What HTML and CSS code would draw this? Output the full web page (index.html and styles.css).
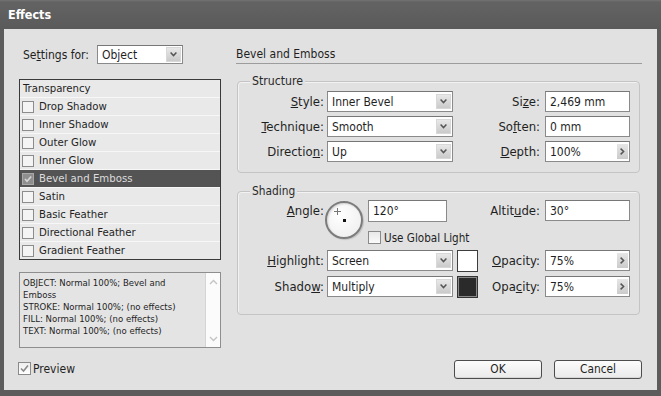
FILE: index.html
```html
<!DOCTYPE html>
<html>
<head>
<meta charset="utf-8">
<link rel="stylesheet" href="styles.css">
</head>
<body>
<div class="window">
  <div class="titlebar">Effects</div>
  <div class="content">
    <div class="left">
      <div class="settings">
        <span class="set-lbl">Se<u>t</u>tings for:</span>
        <div class="select sel-obj"><span class="val">Object</span><span class="drop"><svg width="7" height="5" viewBox="0 0 7 5"><path d="M0.6 0.6 L3.5 3.6 L6.4 0.6" fill="none" stroke="#555" stroke-width="1.5"/></svg></span></div>
      </div>
      <ul class="list">
        <li class="head">Transparency</li>
        <li><span class="cb"></span>Drop Shadow</li>
        <li><span class="cb"></span>Inner Shadow</li>
        <li><span class="cb"></span>Outer Glow</li>
        <li><span class="cb"></span>Inner Glow</li>
        <li class="selected"><span class="cb on"><svg width="10" height="10" viewBox="0 0 10 10"><path d="M2 5 L4 7.2 L8.2 2.5" fill="none" stroke="#d6d6d6" stroke-width="1.6"/></svg></span>Bevel and Emboss</li>
        <li><span class="cb"></span>Satin</li>
        <li><span class="cb"></span>Basic Feather</li>
        <li><span class="cb"></span>Directional Feather</li>
        <li><span class="cb"></span>Gradient Feather</li>
      </ul>
      <div class="summary">
        <div class="sumtext">OBJECT: Normal 100%; Bevel and<br>Emboss<br>STROKE: Normal 100%; (no effects)<br>FILL: Normal 100%; (no effects)<br>TEXT: Normal 100%; (no effects)</div>
        <div class="scroll">
          <svg width="9" height="6" viewBox="0 0 9 6"><path d="M1 5 L4.5 1.5 L8 5" fill="none" stroke="#c4c4c4" stroke-width="1.4"/></svg>
          <svg width="9" height="6" viewBox="0 0 9 6"><path d="M1 1 L4.5 4.5 L8 1" fill="none" stroke="#c4c4c4" stroke-width="1.4"/></svg>
        </div>
      </div>
      <div class="preview"><span class="box"><svg width="11" height="11" viewBox="0 0 11 11"><path d="M2 5.5 L4.5 8 L9 2.5" fill="none" stroke="#8a8a8a" stroke-width="1.6"/></svg></span>Preview</div>
    </div>

    <div class="right">
      <div class="header">Bevel and Emboss</div>

      <div class="group">
        <div class="legend">Structure</div>
        <div class="sgrid">
          <span class="lbl"><u>S</u>tyle:</span>
          <div class="select"><span class="val">Inner Bevel</span><span class="drop"><svg width="7" height="5" viewBox="0 0 7 5"><path d="M0.6 0.6 L3.5 3.6 L6.4 0.6" fill="none" stroke="#555" stroke-width="1.5"/></svg></span></div>
          <span class="rlbl">Si<u>z</u>e:</span>
          <div class="field">2,469 mm</div>

          <span class="lbl"><u>T</u>echnique:</span>
          <div class="select"><span class="val">Smooth</span><span class="drop"><svg width="7" height="5" viewBox="0 0 7 5"><path d="M0.6 0.6 L3.5 3.6 L6.4 0.6" fill="none" stroke="#555" stroke-width="1.5"/></svg></span></div>
          <span class="rlbl">So<u>f</u>ten:</span>
          <div class="field">0 mm</div>

          <span class="lbl">Directio<u>n</u>:</span>
          <div class="select"><span class="val">Up</span><span class="drop"><svg width="7" height="5" viewBox="0 0 7 5"><path d="M0.6 0.6 L3.5 3.6 L6.4 0.6" fill="none" stroke="#555" stroke-width="1.5"/></svg></span></div>
          <span class="rlbl"><u>D</u>epth:</span>
          <div class="field"><span class="val">100%</span><span class="step"><svg width="5" height="7" viewBox="0 0 5 7"><path d="M0.6 0.6 L3.6 3.5 L0.6 6.4" fill="none" stroke="#555" stroke-width="1.5"/></svg></span></div>
        </div>
      </div>

      <div class="group shading">
        <div class="legend">Shading</div>
        <div class="shgrid">
          <span class="lbl top"><u>A</u>ngle:</span>
          <div class="angle-cell">
            <div class="dial"><span class="cross"></span><span class="dot"></span></div>
            <div class="angle-col">
              <div class="field angle-field">120°</div>
              <div class="global"><span class="box"></span>Use Global Light</div>
            </div>
          </div>
          <span class="rlbl top">Altit<u>u</u>de:</span>
          <div class="field top">30°</div>

          <span class="lbl"><u>H</u>ighlight:</span>
          <div class="sel-swatch">
            <div class="select"><span class="val">Screen</span><span class="drop"><svg width="7" height="5" viewBox="0 0 7 5"><path d="M0.6 0.6 L3.5 3.6 L6.4 0.6" fill="none" stroke="#555" stroke-width="1.5"/></svg></span></div>
            <span class="swatch light"></span>
          </div>
          <span class="rlbl"><u>O</u>pacity:</span>
          <div class="field"><span class="val">75%</span><span class="step"><svg width="5" height="7" viewBox="0 0 5 7"><path d="M0.6 0.6 L3.6 3.5 L0.6 6.4" fill="none" stroke="#555" stroke-width="1.5"/></svg></span></div>

          <span class="lbl">Shado<u>w</u>:</span>
          <div class="sel-swatch">
            <div class="select"><span class="val">Multiply</span><span class="drop"><svg width="7" height="5" viewBox="0 0 7 5"><path d="M0.6 0.6 L3.5 3.6 L6.4 0.6" fill="none" stroke="#555" stroke-width="1.5"/></svg></span></div>
            <span class="swatch dark"></span>
          </div>
          <span class="rlbl">Opa<u>c</u>ity:</span>
          <div class="field"><span class="val">75%</span><span class="step"><svg width="5" height="7" viewBox="0 0 5 7"><path d="M0.6 0.6 L3.6 3.5 L0.6 6.4" fill="none" stroke="#555" stroke-width="1.5"/></svg></span></div>
        </div>
      </div>

      <div class="buttons">
        <div class="btn">OK</div>
        <div class="btn">Cancel</div>
      </div>
    </div>
  </div>
</div>
</body>
</html>
```

FILE: styles.css
```css
* { box-sizing: border-box; }
html, body { margin: 0; padding: 0; }
body {
  width: 661px;
  height: 396px;
  background: #5c5c5c;
  font-family: "DejaVu Sans Condensed", "DejaVu Sans", sans-serif;
  font-stretch: condensed;
  font-size: 12px;
  color: #1f1f1f;
  overflow: hidden;
}
u { text-decoration: underline; text-underline-offset: 1px; }

.window {
  width: 661px;
  height: 396px;
  display: flex;
  flex-direction: column;
}
.titlebar {
  height: 29px;
  padding: 2px 0 0 8px;
  line-height: 26px;
  font-weight: bold;
  font-size: 12.5px;
  color: #ffffff;
  background: linear-gradient(#747474 0, #636363 2px, #5a5a5a 100%);
}
.content {
  flex: 1;
  margin: 0 4px 6px 4px;
  background: #e1e1e1;
  display: flex;
  gap: 15px;
  padding: 16px 15px 0 15px;
}

/* Left column */
.left { width: 202px; display: flex; flex-direction: column; }
.settings { display: flex; align-items: center; height: 19px; font-size: 12px; }
.set-lbl { width: 78px; padding-left: 4px; }
.select {
  display: flex;
  align-items: center;
  height: 21px;
  background: #ffffff;
  border: 1px solid #8a8a8a;
  border-top-color: #777;
  padding-left: 4px;
  font-size: 12px;
}
.select .val { flex: 1; white-space: nowrap; }
.drop {
  width: 15px;
  height: 15px;
  margin-right: 1px;
  background: linear-gradient(#e8e8e8, #cacaca);
  border: 1px solid #d8d8d8;
  display: flex;
  align-items: center;
  justify-content: center;
}
.sel-obj { width: 86px; height: 19px; }
.sel-obj .drop { height: 15px; }

.list {
  list-style: none;
  margin: 15px 0 0 0;
  padding: 0;
  border: 1px solid #3a3a3a;
  background: #f7f7f7;
  font-size: 11.3px;
}
.list li {
  height: 17px;
  display: flex;
  align-items: center;
  background: #e9e9e9;
  padding-left: 2px;
  white-space: nowrap;
}
.list li + li { margin-top: 1px; }
.list li.head { padding-left: 3px; }
.cb {
  width: 12px;
  height: 12px;
  margin-right: 5px;
  border: 1px solid #8c8c8c;
  background: #f4f4f4;
  display: flex;
  align-items: center;
  justify-content: center;
}
.list li.selected {
  background-color: #3b3b3b;
  background-image: radial-gradient(circle, #555 0.7px, transparent 0.9px);
  background-size: 2px 2px;
  color: #dcdcdc;
}
.cb.on { background: #8e8e8e; border-color: #a8a8a8; }

.summary {
  margin-top: 12px;
  height: 76px;
  display: flex;
  border: 1px solid #8e8e8e;
  background: #e4e4e4;
}
.sumtext {
  flex: 1;
  padding: 4px 3px;
  font-size: 9.5px;
  line-height: 12px;
  white-space: nowrap;
}
.scroll {
  width: 15px;
  background: #fbfbfb;
  border-left: 1px solid #d4d4d4;
  display: flex;
  flex-direction: column;
  justify-content: space-between;
  align-items: center;
  padding: 6px 0 5px;
}

.preview {
  margin-top: 14px;
  margin-left: -1px;
  display: flex;
  align-items: center;
  font-size: 12px;
  height: 13px;
}
.box {
  width: 13px;
  height: 13px;
  border: 1px solid #8a8a8a;
  background: linear-gradient(#eeeeee, #ffffff);
  margin-right: 2px;
  display: flex;
  align-items: center;
  justify-content: center;
}

/* Right column */
.right { width: 406px; display: flex; flex-direction: column; }
.header {
  height: 19px;
  padding-top: 1px;
  line-height: 16px;
  font-size: 12px;
  border-bottom: 1px solid #9c9c9c;
}
.group {
  margin-top: 17px;
  margin-left: 1px;
  width: 403px;
  border: 1px solid #c4c4c4;
  border-radius: 4px;
  box-shadow: inset 1px 1px 0 #f2f2f2;
  padding: 0 9px 10px 0;
}
.legend {
  margin: -8px 0 0 12px;
  padding: 0 2px;
  width: fit-content;
  line-height: 15px;
  font-size: 12.2px;
  background: #e1e1e1;
  color: #2a2a2a;
}
.shading .legend { font-size: 11.8px; }
.sgrid {
  margin-top: 2px;
  display: grid;
  grid-template-columns: 89px 126px 1fr 85px;
  grid-auto-rows: 21px;
  row-gap: 4px;
}
.lbl, .rlbl { font-size: 13px; white-space: nowrap; align-self: center; text-align: right; }
.lbl { padding-right: 3px; }
.rlbl { padding-right: 5px; }
.top { align-self: start; line-height: 22px; }
.field {
  height: 21px;
  background: #ffffff;
  border: 1px solid #8a8a8a;
  border-top-color: #777;
  padding-left: 4px;
  display: flex;
  align-items: center;
  white-space: nowrap;
}
.field .val { flex: 1; }
.step {
  width: 11px;
  height: 15px;
  margin-right: 1px;
  background: linear-gradient(#e6e6e6, #cbcbcb);
  display: flex;
  align-items: center;
  justify-content: center;
}

.shading { margin-top: 18px; padding-bottom: 17px; }
.shgrid {
  margin-top: 1px;
  display: grid;
  grid-template-columns: 89px 151px 1fr 85px;
  grid-template-rows: 45px 21px 21px;
  row-gap: 5px;
}
.angle-cell { display: flex; gap: 5px; }
.dial {
  position: relative;
  width: 38px;
  height: 38px;
  margin-left: -2px;
  margin-top: 1px;
  border-radius: 50%;
  border: 2px solid #7c7c7c;
  background: radial-gradient(circle at 40% 35%, #ffffff, #ececec);
  box-shadow: 1px 1px 1px rgba(0,0,0,0.15), inset 1px 1px 2px rgba(0,0,0,0.15);
}
.dot {
  position: absolute;
  left: 16px;
  top: 16px;
  width: 3px;
  height: 3px;
  background: #111;
}
.cross {
  position: absolute;
  left: 7px;
  top: 5px;
  width: 7px;
  height: 7px;
  background:
    linear-gradient(#777, #777) center / 7px 1px no-repeat,
    linear-gradient(#777, #777) center / 1px 7px no-repeat;
}
.angle-col { display: flex; flex-direction: column; }
.angle-field { width: 79px; height: 22px; }
.global {
  margin-top: 9px;
  display: flex;
  align-items: center;
  height: 13px;
  font-size: 11.6px;
  white-space: nowrap;
}
.global .box { margin-right: 3px; background: linear-gradient(#e9e9e9, #fafafa); }
.sel-swatch { display: flex; gap: 4px; }
.sel-swatch .select { width: 126px; }
.swatch {
  width: 21px;
  height: 22px;
  border: 1px solid #3c3c3c;
}
.swatch.light { background: #ffffff; }
.swatch.dark { background: #2a2a2a; box-shadow: inset 0 0 0 1px #8a8a8a; border-color: #333; }

.buttons {
  margin-top: 45px;
  display: flex;
  justify-content: flex-end;
  gap: 12px;
}
.btn {
  width: 88px;
  height: 19px;
  border: 1px solid #4c4c4c;
  border-radius: 3px;
  background: linear-gradient(#fcfcfc, #e9e9e9);
  box-shadow: inset 0 -1px 0 #d6d6d6;
  text-align: center;
  line-height: 17px;
  font-size: 11.8px;
}
```
